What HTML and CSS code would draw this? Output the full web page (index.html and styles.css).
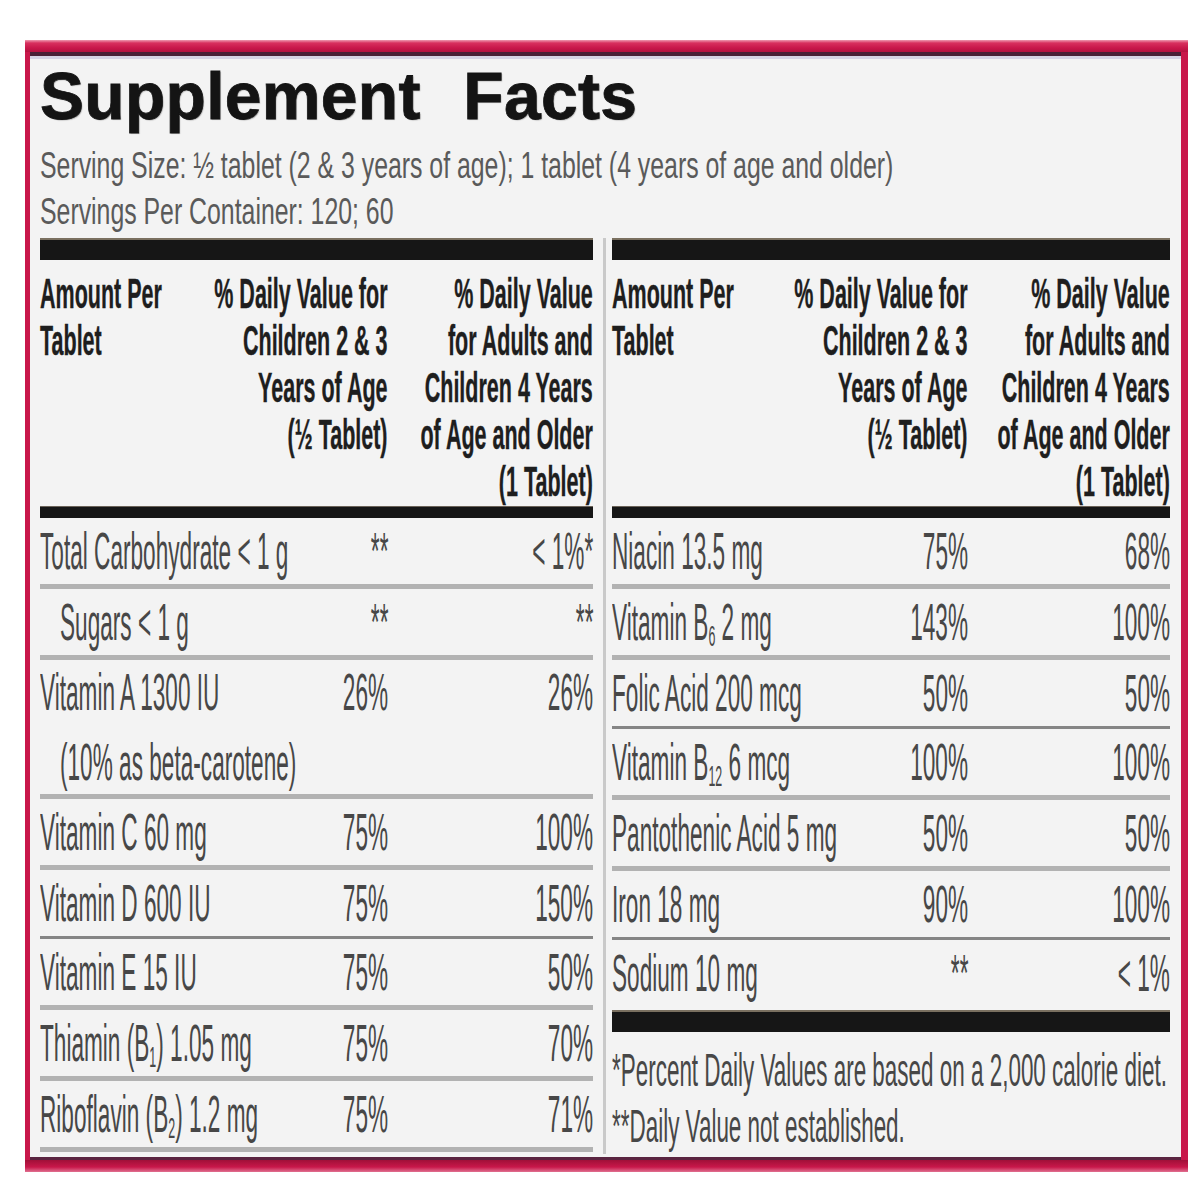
FILE: index.html
```html
<!DOCTYPE html>
<html lang="en">
<head>
<meta charset="utf-8">
<title>Supplement Facts</title>
<link rel="stylesheet" href="styles.css">
</head>
<body>
<div class="frame">
  <div class="sheet">
    <h1 class="title">Supplement Facts</h1>
    <div class="serving"><span class="sv">Serving Size: ½ tablet (2 &amp; 3 years of age); 1 tablet (4 years of age and older)<br>Servings Per Container: 120; 60</span></div>
    <div class="cols">
      <section class="panel left">
        <div class="bar"></div>
        <div class="hrow">
          <div class="c1"><span class="h">Amount Per<br>Tablet</span></div>
          <div class="c2"><span class="h">% Daily Value for<br>Children 2 &amp; 3<br>Years of Age<br>(½ Tablet)</span></div>
          <div class="c3"><span class="h">% Daily Value<br>for Adults and<br>Children 4 Years<br>of Age and Older<br>(1 Tablet)</span></div>
        </div>
        <div class="bar thin"></div>
        <div class="row"><div class="c1"><span class="t">Total Carbohydrate &lt; 1 g</span></div><div class="c2"><span class="t">**</span></div><div class="c3"><span class="t">&lt; 1%*</span></div></div>
        <div class="row"><div class="c1"><span class="t ind">Sugars &lt; 1 g</span></div><div class="c2"><span class="t">**</span></div><div class="c3"><span class="t">**</span></div></div>
        <div class="row first"><div class="c1"><span class="t">Vitamin A 1300 IU</span></div><div class="c2"><span class="t">26%</span></div><div class="c3"><span class="t">26%</span></div></div>
        <div class="row second"><div class="c1"><span class="t ind">(10% as beta-carotene)</span></div><div class="c2"></div><div class="c3"></div></div>
        <div class="row"><div class="c1"><span class="t">Vitamin C 60 mg</span></div><div class="c2"><span class="t">75%</span></div><div class="c3"><span class="t">100%</span></div></div>
        <div class="row dark"><div class="c1"><span class="t">Vitamin D 600 IU</span></div><div class="c2"><span class="t">75%</span></div><div class="c3"><span class="t">150%</span></div></div>
        <div class="row"><div class="c1"><span class="t">Vitamin E 15 IU</span></div><div class="c2"><span class="t">75%</span></div><div class="c3"><span class="t">50%</span></div></div>
        <div class="row"><div class="c1"><span class="t">Thiamin (B<sub>1</sub>) 1.05 mg</span></div><div class="c2"><span class="t">75%</span></div><div class="c3"><span class="t">70%</span></div></div>
        <div class="row"><div class="c1"><span class="t">Riboflavin (B<sub>2</sub>) 1.2 mg</span></div><div class="c2"><span class="t">75%</span></div><div class="c3"><span class="t">71%</span></div></div>
      </section>
      <section class="panel right">
        <div class="bar"></div>
        <div class="hrow">
          <div class="c1"><span class="h">Amount Per<br>Tablet</span></div>
          <div class="c2"><span class="h">% Daily Value for<br>Children 2 &amp; 3<br>Years of Age<br>(½ Tablet)</span></div>
          <div class="c3"><span class="h">% Daily Value<br>for Adults and<br>Children 4 Years<br>of Age and Older<br>(1 Tablet)</span></div>
        </div>
        <div class="bar thin"></div>
        <div class="row"><div class="c1"><span class="t">Niacin 13.5 mg</span></div><div class="c2"><span class="t">75%</span></div><div class="c3"><span class="t">68%</span></div></div>
        <div class="row"><div class="c1"><span class="t">Vitamin B<sub>6</sub> 2 mg</span></div><div class="c2"><span class="t">143%</span></div><div class="c3"><span class="t">100%</span></div></div>
        <div class="row dark"><div class="c1"><span class="t">Folic Acid 200 mcg</span></div><div class="c2"><span class="t">50%</span></div><div class="c3"><span class="t">50%</span></div></div>
        <div class="row"><div class="c1"><span class="t">Vitamin B<sub>12</sub> 6 mcg</span></div><div class="c2"><span class="t">100%</span></div><div class="c3"><span class="t">100%</span></div></div>
        <div class="row"><div class="c1"><span class="t">Pantothenic Acid 5 mg</span></div><div class="c2"><span class="t">50%</span></div><div class="c3"><span class="t">50%</span></div></div>
        <div class="row dark"><div class="c1"><span class="t">Iron 18 mg</span></div><div class="c2"><span class="t">90%</span></div><div class="c3"><span class="t">100%</span></div></div>
        <div class="row last"><div class="c1"><span class="t">Sodium 10 mg</span></div><div class="c2"><span class="t">**</span></div><div class="c3"><span class="t">&lt; 1%</span></div></div>
        <div class="bar foot"></div>
        <div class="notes">
          <div class="note"><span class="n">*Percent Daily Values are based on a 2,000 calorie diet.</span></div>
          <div class="note"><span class="n">**Daily Value not established.</span></div>
        </div>
      </section>
    </div>
  </div>
</div>
</body>
</html>
```
FILE: styles.css
```css
* { box-sizing: border-box; }

html, body {
  margin: 0;
  background: #ffffff;
  font-family: "Liberation Sans", Arial, sans-serif;
}

.frame {
  margin: 40px 0 0 25px;
  width: 1163px;
  height: 1132px;
  padding: 12px 7px 12px 5px;
  background:
    linear-gradient(to bottom, #ee9ab0 0, #d8305e 3px, #c8174a 8px, #b3123f 12px) top / 100% 12px no-repeat,
    linear-gradient(to top, #e07090 0, #c8174a 5px, #a01038 12px) bottom / 100% 12px no-repeat,
    #c8174a;
  overflow: hidden;
}

.sheet {
  height: 100%;
  background: #f3f3f3;
  border-top: 4px solid #4a2036;
  border-bottom: 3px solid #5a2440;
  box-shadow: inset 0 3px 0 #d6d4e4;
  padding: 0 11px 0 10px;
  overflow: hidden;
}

.title {
  margin: 0;
  padding-top: 5px;
  height: 75px;
  font-size: 66px;
  line-height: 70px;
  font-weight: 700;
  color: #141414;
  word-spacing: 24px;
  letter-spacing: 0.3px;
  -webkit-text-stroke: 0.8px #141414;
  text-shadow: 1px 1px 1px rgba(0, 0, 0, 0.25);
}

.serving {
  margin-top: 12px;
  height: 92px;
  color: #5a5a5a;
}

.sv {
  display: inline-block;
  white-space: nowrap;
  font-size: 36px;
  line-height: 46px;
  transform: scaleX(0.69);
  transform-origin: left top;
}

.cols {
  display: flex;
  margin-top: 3px;
}

.panel.left {
  width: 553px;
  margin-right: 10px;
}

.panel.right {
  width: 567px;
  border-left: 3px solid #c9c9c9;
  padding-left: 6px;
}

.bar {
  height: 22px;
  background: #161616;
  border-top: 2px solid #7a7060;
}

.bar.thin {
  height: 12px;
  border-top: 1px solid #6a6258;
}

.bar.foot {
  margin-top: 4px;
  height: 22px;
}

.hrow,
.row {
  display: grid;
  grid-template-columns: minmax(0, 1fr) 150px 205px;
}

.right .hrow,
.right .row {
  grid-template-columns: minmax(0, 1fr) 150px 202px;
}

.hrow {
  padding: 10px 0 1px;
  align-items: start;
}

.c1, .c2, .c3 {
  display: flex;
  align-items: center;
  min-width: 0;
}

.c2, .c3 {
  justify-content: flex-end;
}

.hrow .c1, .hrow .c2, .hrow .c3 {
  align-items: flex-start;
}

.h {
  display: inline-block;
  flex-shrink: 0;
  white-space: nowrap;
  font-size: 43px;
  line-height: 47px;
  font-weight: 700;
  color: #1e1e1e;
  -webkit-text-stroke: 0.4px #1e1e1e;
  transform: scaleX(0.5);
  transform-origin: left top;
}

.c2 .h, .c3 .h {
  text-align: right;
  transform-origin: right top;
}

.row {
  height: 71px;
  border-bottom: 5px solid #b2b2b2;
}

.row.dark {
  height: 69px;
  border-bottom: 3px solid #858585;
}

.row.first {
  height: 64px;
  border-bottom: 0;
}

.row.second {
  height: 75px;
  padding-top: 6px;
}

.row.last {
  height: 66px;
  border-bottom: 0;
}

.t {
  display: inline-block;
  flex-shrink: 0;
  white-space: nowrap;
  font-size: 52px;
  line-height: 1;
  color: #474747;
  transform: scaleX(0.435);
  transform-origin: left center;
}

.c2 .t, .c3 .t {
  transform-origin: right center;
}

.t.ind {
  margin-left: 20px;
}

.t sub {
  font-size: 55%;
  line-height: 0;
  vertical-align: -0.22em;
}

.notes {
  padding-top: 10px;
}

.note {
  height: 56px;
  display: flex;
  align-items: center;
}

.n {
  display: inline-block;
  flex-shrink: 0;
  white-space: nowrap;
  font-size: 46px;
  line-height: 1;
  color: #474747;
  transform: scaleX(0.488);
  transform-origin: left center;
}
```
